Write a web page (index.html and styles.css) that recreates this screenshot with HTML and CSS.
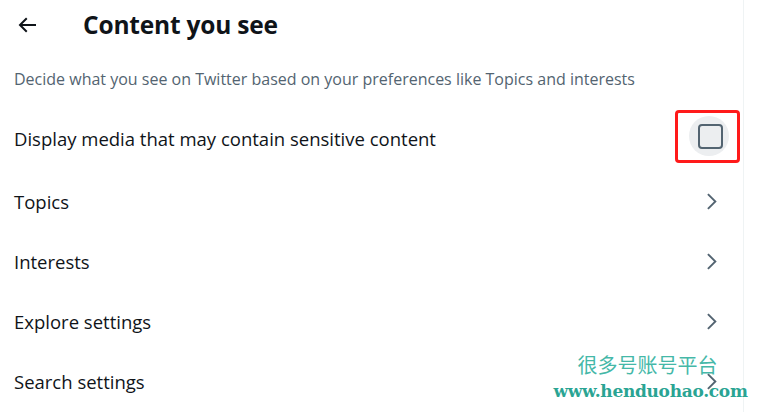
FILE: index.html
```html
<html>
<head>
	<title>Content you see</title>
<link rel="stylesheet" href="styles.css">
</head>
<body>
	<div id="page">
		<div id="column">
			<div class="header">
				<div class="back">
					<svg viewBox="0 0 24 24" width="24" height="24"><path d="M7.414 13l5.043 5.04-1.414 1.42L3.586 12l7.457-7.46 1.414 1.42L7.414 11H21v2H7.414z"></path></svg>
				</div>
				<h2>Content you see</h2>
			</div>
			<div class="intro">Decide what you see on Twitter based on your preferences like Topics and interests</div>
			<div class="row first">
				<span>Display media that may contain sensitive content</span>
				<div class="check-wrap">
					<div class="check-circle"><div class="check"></div></div>
				</div>
			</div>
			<div class="row">
				<span>Topics</span>
				<svg class="chevron" viewBox="0 0 24 24"><path d="M14.586 12L7.543 4.96l1.414-1.42L17.414 12l-8.457 8.46-1.414-1.42L14.586 12z"></path></svg>
			</div>
			<div class="row">
				<span>Interests</span>
				<svg class="chevron" viewBox="0 0 24 24"><path d="M14.586 12L7.543 4.96l1.414-1.42L17.414 12l-8.457 8.46-1.414-1.42L14.586 12z"></path></svg>
			</div>
			<div class="row">
				<span>Explore settings</span>
				<svg class="chevron" viewBox="0 0 24 24"><path d="M14.586 12L7.543 4.96l1.414-1.42L17.414 12l-8.457 8.46-1.414-1.42L14.586 12z"></path></svg>
			</div>
			<div class="row">
				<span>Search settings</span>
				<svg class="chevron" viewBox="0 0 24 24"><path d="M14.586 12L7.543 4.96l1.414-1.42L17.414 12l-8.457 8.46-1.414-1.42L14.586 12z"></path></svg>
			</div>
		</div>
	</div>
	<div id="watermark">
		<div class="wm-cn">很多号账号平台</div>
		<div class="wm-url">www.henduohao.com</div>
	</div>
</body>
</html>
```

FILE: styles.css
```css
body {
	background-color: white;
	font-family: "Open Sans", "Noto Sans", sans-serif;
	color: #0f1419;
	margin: 0;
	overflow: hidden;
}

#page {
	display: flex;
	height: 412px;
}

#column {
	width: 743px;
	border-right: 1px solid #eff3f4;
}

.header {
	display: flex;
	align-items: center;
	height: 48px;
}

.back {
	width: 68px;
	padding-left: 15px;
	display: flex;
	align-items: center;
	padding-top: 1px;
}

.back svg {
	fill: #0f1419;
}

h2 {
	margin: 0;
	font-size: 24.5px;
	font-weight: 700;
	letter-spacing: -0.2px;
}

.intro {
	height: 60px;
	box-sizing: border-box;
	padding: 20px 14px 0;
	line-height: 22px;
	font-size: 16px;
	color: #536471;
}

.row {
	display: flex;
	justify-content: space-between;
	align-items: center;
	height: 60px;
	padding: 0 14px;
	font-size: 18.5px;
}

.row.first {
	margin-bottom: 3px;
}

.check-wrap {
	border: 3px solid #ff1a1a;
	border-radius: 4px;
	width: 59px;
	height: 47px;
	display: flex;
	align-items: center;
	justify-content: center;
	margin-right: -11px;
	margin-top: -4px;
}

.check-circle {
	width: 40px;
	height: 40px;
	border-radius: 50%;
	background: #eceef0;
	display: flex;
	align-items: center;
	justify-content: center;
	margin-left: 2px;
}

.check {
	width: 21px;
	height: 21px;
	border: 2px solid #536471;
	border-radius: 4px;
	margin-left: 3px;
}

.chevron {
	width: 23px;
	height: 23px;
	fill: #536471;
	margin-right: 6px;
}

#watermark {
	position: absolute;
	left: 553px;
	top: 352px;
	width: 195px;
	text-align: center;
}

.wm-cn {
	font-family: "Noto Sans CJK SC", sans-serif;
	font-size: 20px;
	color: #45b8a8;
	line-height: 26px;
	padding-right: 6px;
}

.wm-url {
	font-family: "DejaVu Serif", serif;
	font-weight: bold;
	font-size: 17px;
	color: #2aa493;
	line-height: 26px;
	letter-spacing: -0.3px;
}
```
